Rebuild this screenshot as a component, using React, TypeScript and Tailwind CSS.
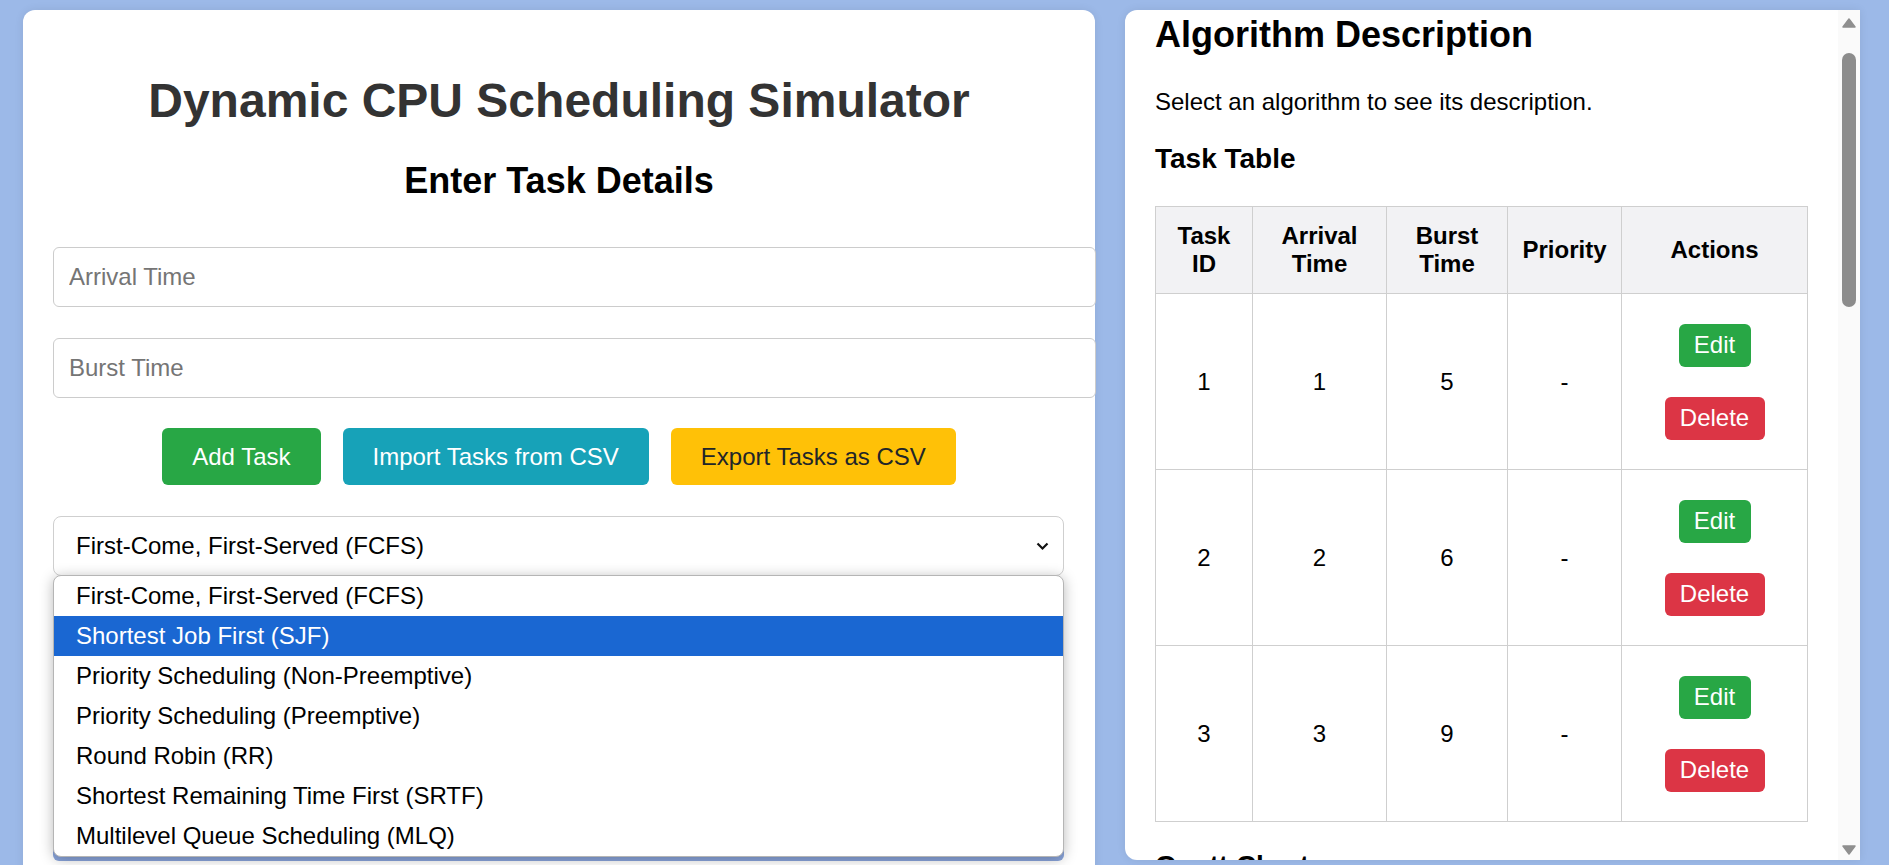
import React from "react";

const options = [
  "First-Come, First-Served (FCFS)",
  "Shortest Job First (SJF)",
  "Priority Scheduling (Non-Preemptive)",
  "Priority Scheduling (Preemptive)",
  "Round Robin (RR)",
  "Shortest Remaining Time First (SRTF)",
  "Multilevel Queue Scheduling (MLQ)",
];

const tasks = [
  { id: 1, arrival: 1, burst: 5, priority: "-" },
  { id: 2, arrival: 2, burst: 6, priority: "-" },
  { id: 3, arrival: 3, burst: 9, priority: "-" },
];

function TaskForm() {
  return (
    <div className="relative w-[1072px] h-[900px] shrink-0 bg-white rounded-[12px] px-[30px] shadow-[0_0_10px_rgba(0,0,0,0.08)]">
      <h1 className="mt-[63px] text-[48px] leading-[55px] font-bold text-[#333] text-center">
        Dynamic CPU Scheduling Simulator
      </h1>
      <h2 className="mt-[32px] text-[36px] leading-[41px] font-bold text-black text-center">
        Enter Task Details
      </h2>

      {/* inputs */}
      <input
        type="text"
        placeholder="Arrival Time"
        className="block mt-[46px] w-[1043px] h-[60px] border border-[#ccc] rounded-[6px] px-[15px] text-[24px] placeholder:text-[#757575] outline-none"
      />
      <input
        type="text"
        placeholder="Burst Time"
        className="block mt-[31px] w-[1043px] h-[60px] border border-[#ccc] rounded-[6px] px-[15px] text-[24px] placeholder:text-[#757575] outline-none"
      />

      {/* buttons */}
      <div className="mt-[30px] flex justify-center gap-[22px]">
        <button className="h-[57px] px-[30px] text-[24px] rounded-[6px] bg-[#28a745] text-white">
          Add Task
        </button>
        <button className="h-[57px] px-[30px] text-[24px] rounded-[6px] bg-[#17a2b8] text-white">
          Import Tasks from CSV
        </button>
        <button className="h-[57px] px-[30px] text-[24px] rounded-[6px] bg-[#ffc107] text-[#212529]">
          Export Tasks as CSV
        </button>
      </div>

      {/* algorithm select */}
      <div className="mt-[31px] w-[1011px] h-[60px] border border-[#cfcfcf] rounded-[8px] pl-[22px] pr-[14px] flex items-center justify-between text-[24px] text-black">
        <span>First-Come, First-Served (FCFS)</span>
        <svg width="13" height="9" viewBox="0 0 13 9">
          <path d="M1.5 1.5 L6.5 6.5 L11.5 1.5" fill="none" stroke="#111" strokeWidth="2.2" />
        </svg>
      </div>

      <div className="mt-[225px] w-[1011px] h-[60px] rounded-[6px] bg-[#8aa5dc]" />

      {/* open dropdown */}
      <div className="absolute left-[30px] top-[565px] w-[1011px] bg-white border border-[#b5b5b5] rounded-[8px] overflow-hidden shadow-[0_2px_14px_rgba(0,0,0,0.28)]">
        {options.map((o, i) => (
          <div
            key={o}
            className={
              i === 1
                ? "h-[40px] pl-[22px] flex items-center text-[24px] bg-[#1a67d2] text-white"
                : "h-[40px] pl-[22px] flex items-center text-[24px] text-black"
            }
          >
            {o}
          </div>
        ))}
      </div>
    </div>
  );
}

function Scrollbar() {
  return (
    <div className="absolute right-0 top-0 bottom-0 w-[22px] bg-[#fafafa]">
      <svg className="absolute left-[4px] top-[8px]" width="14" height="10" viewBox="0 0 14 10">
        <path d="M7 1 L13 9 L1 9 Z" fill="#8f8f8f" stroke="#8f8f8f" strokeLinejoin="round" strokeWidth="1.5" />
      </svg>
      <div className="absolute left-[4px] top-[43px] w-[14px] h-[254px] rounded-full bg-[#8c8c8c]" />
      <svg className="absolute left-[4px] top-[835px]" width="14" height="10" viewBox="0 0 14 10">
        <path d="M1 1 L13 1 L7 9 Z" fill="#8f8f8f" stroke="#8f8f8f" strokeLinejoin="round" strokeWidth="1.5" />
      </svg>
    </div>
  );
}

function Description() {
  return (
    <div className="relative w-[735px] h-[850px] shrink-0 bg-white rounded-l-[12px] overflow-hidden shadow-[0_0_10px_rgba(0,0,0,0.08)]">
      <div className="pl-[30px] pt-[4px] text-black">
        <h2 className="text-[36px] leading-[41px] font-bold">Algorithm Description</h2>
        <p className="mt-[33px] text-[24px] leading-[28px]">
          Select an algorithm to see its description.
        </p>
        <h3 className="mt-[27px] text-[28px] leading-[32px] font-bold">Task Table</h3>

        {/* Task Table */}
        <table className="mt-[31px] w-[652px] table-fixed text-[24px] leading-[28px]">
          <colgroup>
            <col className="w-[97px]" />
            <col className="w-[134px]" />
            <col className="w-[121px]" />
            <col className="w-[114px]" />
            <col className="w-[186px]" />
          </colgroup>
          <thead>
            <tr className="bg-[#f2f2f4]">
              <th className="h-[87px] p-0 border border-[#cfcfcf] font-bold">
                Task
                <br />
                ID
              </th>
              <th className="h-[87px] p-0 border border-[#cfcfcf] font-bold">
                Arrival
                <br />
                Time
              </th>
              <th className="h-[87px] p-0 border border-[#cfcfcf] font-bold">
                Burst
                <br />
                Time
              </th>
              <th className="h-[87px] p-0 border border-[#cfcfcf] font-bold">Priority</th>
              <th className="h-[87px] p-0 border border-[#cfcfcf] font-bold">Actions</th>
            </tr>
          </thead>
          <tbody>
            {tasks.map((t) => (
              <tr key={t.id}>
                <td className="h-[176px] p-0 border border-[#cfcfcf] text-center">{t.id}</td>
                <td className="h-[176px] p-0 border border-[#cfcfcf] text-center">{t.arrival}</td>
                <td className="h-[176px] p-0 border border-[#cfcfcf] text-center">{t.burst}</td>
                <td className="h-[176px] p-0 border border-[#cfcfcf] text-center">{t.priority}</td>
                <td className="h-[176px] p-0 border border-[#cfcfcf]">
                  <div className="flex flex-col items-center gap-[30px]">
                    <button className="h-[43px] w-[72px] rounded-[6px] bg-[#28a745] text-white">
                      Edit
                    </button>
                    <button className="h-[43px] w-[100px] rounded-[6px] bg-[#dc3545] text-white">
                      Delete
                    </button>
                  </div>
                </td>
              </tr>
            ))}
          </tbody>
        </table>

        <h3 className="mt-[28px] text-[28px] leading-[32px] font-bold">Gantt Chart</h3>
      </div>
      <Scrollbar />
    </div>
  );
}

export default function App() {
  return (
    <div className="h-[865px] overflow-hidden bg-[#9cb9e8] flex items-start gap-[30px] pl-[23px] pt-[10px] font-['Liberation_Sans',Arial,sans-serif]">
      <TaskForm />
      <Description />
    </div>
  );
}
